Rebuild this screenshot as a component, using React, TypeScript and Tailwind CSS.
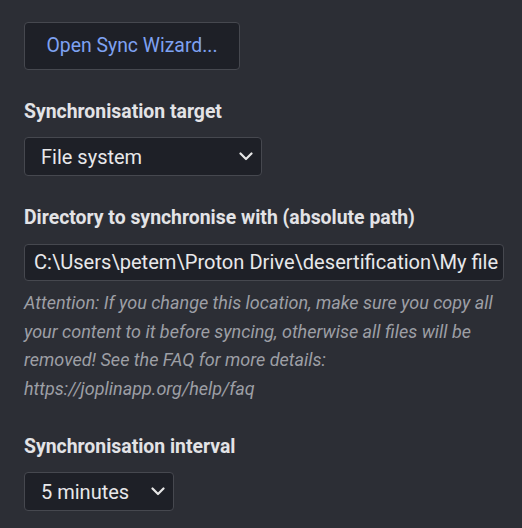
import React from "react";

function Chevron() {
  return (
    <svg width="14" height="9" viewBox="0 0 14 9" fill="none" className="shrink-0">
      <path d="M1.5 1.5 L7 7 L12.5 1.5" stroke="#e6e6e6" strokeWidth="2.2" strokeLinecap="round" strokeLinejoin="round" />
    </svg>
  );
}

export default function App() {
  return (
    <div
      className="w-[522px] h-[528px] bg-[#2c2e35] overflow-hidden pl-[24px] pt-[22px]"
      style={{ fontFamily: "Roboto, 'Noto Sans', sans-serif" }}
    >
      <button className="w-[216px] h-[48px] rounded-[4px] border border-[#46484f] bg-[#1e2027] text-[#7ea2f2] text-[19.4px] flex items-center justify-center">
        Open Sync Wizard...
      </button>

      <div className="mt-[30px] text-[19.4px] font-bold text-[#e3e3e6] leading-[24px]">
        Synchronisation target
      </div>
      <div className="mt-[13px] w-[238px] h-[39px] rounded-[4px] border border-[#46484f] bg-[#1e2027] flex items-center justify-between pl-[16px] pr-[8px]">
        <span className="text-[20px] text-[#e8e8ea]">File system</span>
        <Chevron />
      </div>

      <div className="mt-[30px] text-[19.4px] font-bold text-[#e3e3e6] leading-[24px]">
        Directory to synchronise with (absolute path)
      </div>
      <div className="mt-[14px] w-[480px] h-[37px] rounded-[4px] border border-[#46484f] bg-[#1e2027] flex items-center pl-[9px] overflow-hidden">
        <span className="text-[20.1px] text-[#e8e8ea] whitespace-nowrap">
          C:\Users\petem\Proton Drive\desertification\My file
        </span>
      </div>
      <div className="mt-[8px] w-[486px] text-[18px] italic text-[#9d9fa5] leading-[28.5px]">
        Attention: If you change this location, make sure you copy all your content to it before syncing, otherwise all files will be removed! See the FAQ for more details: https://joplinapp.org/help/faq
      </div>

      <div className="mt-[32px] text-[19.4px] font-bold text-[#e3e3e6] leading-[24px]">
        Synchronisation interval
      </div>
      <div className="mt-[13px] w-[150px] h-[39px] rounded-[4px] border border-[#46484f] bg-[#1e2027] flex items-center justify-between pl-[16px] pr-[8px]">
        <span className="text-[20px] text-[#e8e8ea]">5 minutes</span>
        <Chevron />
      </div>
    </div>
  );
}
